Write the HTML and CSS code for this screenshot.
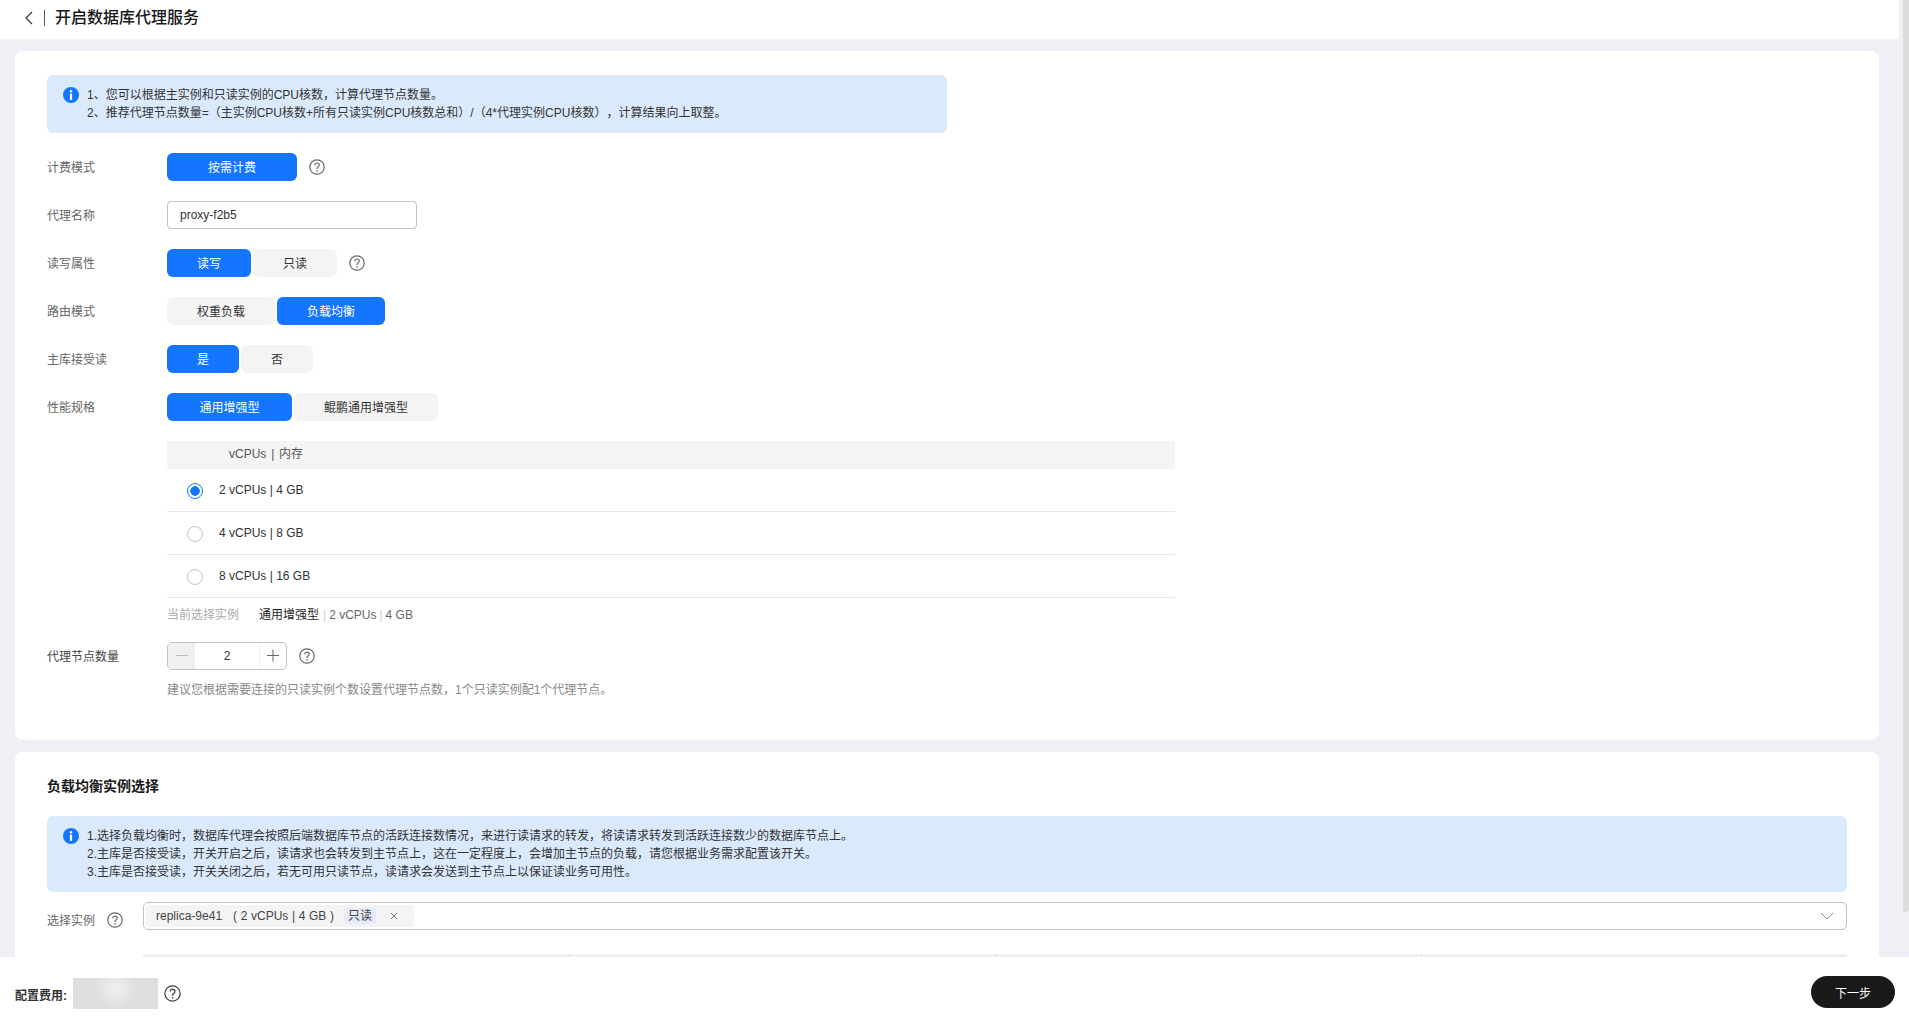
FILE: index.html
```html
<!DOCTYPE html>
<html lang="zh-CN">
  <head>
    <meta charset="utf-8" />
    <title>开启数据库代理服务</title>
    <link rel="stylesheet" href="styles.css">
  </head>

  <body>
    <svg class="icon-defs" width="0" height="0">
      <symbol id="help" viewBox="0 0 16 16">
        <circle cx="8" cy="8" r="7.2" fill="none" stroke="currentColor" stroke-width="1.2" />
        <path d="M5.7 6.2c0-1.3 1-2.2 2.3-2.2s2.3.9 2.3 2.1c0 1-.6 1.5-1.3 2-.7.4-1 .8-1 1.6v.3" fill="none" stroke="currentColor" stroke-width="1.2" />
        <circle cx="8" cy="12" r=".8" fill="currentColor" />
      </symbol>
      <symbol id="info" viewBox="0 0 16 16">
        <circle cx="8" cy="8" r="8" fill="#1476ff" />
        <circle cx="8" cy="4.3" r="1.2" fill="#fff" />
        <rect x="6.9" y="6.5" width="2.2" height="6.5" rx=".4" fill="#fff" />
      </symbol>
    </svg>

    <div class="page">
      <header class="topbar">
        <svg class="back-icon" width="10" height="14" viewBox="0 0 10 14">
          <path d="M8 1 2 7l6 6" fill="none" stroke="#333" stroke-width="1.2" />
        </svg>
        <span class="topbar-line"></span>
        <h1 class="topbar-title">开启数据库代理服务</h1>
      </header>

      <main class="content">
        <section class="card">
          <div class="notice notice-small">
            <svg class="notice-icon" width="16" height="16"><use href="#info" /></svg>
            <div>
              <p>1、您可以根据主实例和只读实例的CPU核数，计算代理节点数量。</p>
              <p>2、推荐代理节点数量=（主实例CPU核数+所有只读实例CPU核数总和）/（4*代理实例CPU核数），计算结果向上取整。</p>
            </div>
          </div>

          <div class="form-row">
            <label class="form-label">计费模式</label>
            <button type="button" class="seg active w-130">按需计费</button>
            <svg class="help" width="16" height="16"><use href="#help" /></svg>
          </div>

          <div class="form-row">
            <label class="form-label">代理名称</label>
            <input class="text-input" type="text" value="proxy-f2b5">
          </div>

          <div class="form-row">
            <label class="form-label">读写属性</label>
            <div class="seg-group">
              <button type="button" class="seg active w-84">读写</button>
              <button type="button" class="seg w-84">只读</button>
            </div>
            <svg class="help" width="16" height="16"><use href="#help" /></svg>
          </div>

          <div class="form-row">
            <label class="form-label">路由模式</label>
            <div class="seg-group">
              <button type="button" class="seg w-108">权重负载</button>
              <button type="button" class="seg active w-108">负载均衡</button>
            </div>
          </div>

          <div class="form-row">
            <label class="form-label">主库接受读</label>
            <div class="seg-group">
              <button type="button" class="seg active w-72">是</button>
              <button type="button" class="seg w-72">否</button>
            </div>
          </div>

          <div class="form-row">
            <label class="form-label">性能规格</label>
            <div class="seg-group">
              <button type="button" class="seg active w-125">通用增强型</button>
              <button type="button" class="seg w-144">鲲鹏通用增强型</button>
            </div>
          </div>

          <div class="spec-block">
            <table class="spec-table">
              <thead>
                <tr><th>vCPUs | 内存</th></tr>
              </thead>
              <tbody>
                <tr><td><span class="radio checked"></span>2 vCPUs | 4 GB</td></tr>
                <tr><td><span class="radio"></span>4 vCPUs | 8 GB</td></tr>
                <tr><td><span class="radio"></span>8 vCPUs | 16 GB</td></tr>
              </tbody>
            </table>
            <div class="current">
              <span class="current-label">当前选择实例</span>
              <span class="current-type">通用增强型</span>
              <span class="current-sep">|</span>
              <span>2 vCPUs</span>
              <span class="current-sep">|</span>
              <span>4 GB</span>
            </div>
          </div>

          <div class="form-row stepper-row">
            <label class="form-label dark">代理节点数量</label>
            <div class="stepper">
              <span class="step-btn step-minus"></span>
              <span class="step-value">2</span>
              <span class="step-btn step-plus"></span>
            </div>
            <svg class="help" width="16" height="16"><use href="#help" /></svg>
          </div>
          <p class="hint">建议您根据需要连接的只读实例个数设置代理节点数，1个只读实例配1个代理节点。</p>
        </section>

        <section class="card card-second">
          <h2 class="card-title">负载均衡实例选择</h2>
          <div class="notice">
            <svg class="notice-icon" width="16" height="16"><use href="#info" /></svg>
            <div>
              <p>1.选择负载均衡时，数据库代理会按照后端数据库节点的活跃连接数情况，来进行读请求的转发，将读请求转发到活跃连接数少的数据库节点上。</p>
              <p>2.主库是否接受读，开关开启之后，读请求也会转发到主节点上，这在一定程度上，会增加主节点的负载，请您根据业务需求配置该开关。</p>
              <p>3.主库是否接受读，开关关闭之后，若无可用只读节点，读请求会发送到主节点上以保证读业务可用性。</p>
            </div>
          </div>

          <div class="select-row">
            <label class="select-label">选择实例</label>
            <svg class="help select-help" width="16" height="16"><use href="#help" /></svg>
            <div class="select-box">
              <span class="tag">
                <span>replica-9e41</span>
                <span class="tag-spec">( 2 vCPUs | 4 GB )</span>
                <span class="tag-badge">只读</span>
                <svg class="tag-close" width="8" height="8" viewBox="0 0 8 8">
                  <path d="m1 1 6 6M7 1 1 7" stroke="#777" stroke-width="1" />
                </svg>
              </span>
              <svg class="select-arrow" width="14" height="8" viewBox="0 0 14 8">
                <path d="m1 1 6 6 6-6" fill="none" stroke="#888" stroke-width="1" />
              </svg>
            </div>
          </div>

          <div class="instance-head">
            <span></span><span></span><span></span><span></span>
          </div>
        </section>
      </main>

      <footer class="bottombar">
        <span class="fee-label">配置费用:</span>
        <span class="fee-blur"></span>
        <svg class="help fee-help" width="17" height="17"><use href="#help" /></svg>
        <button type="button" class="next-btn">下一步</button>
      </footer>

      <div class="scroll-thumb"></div>
    </div>
  </body>
</html>
```

FILE: styles.css
```css
* {
  box-sizing: border-box;
}

html, body {
  height: 100%;
}

body {
  margin: 0;
  overflow: hidden;
  font-family: "Liberation Sans", "Noto Sans CJK SC", sans-serif;
  font-size: 12px;
  color: #252b3a;
  background-color: #eef0f5;
  text-spacing-trim: space-all;
}

p, h1, h2 {
  margin: 0;
}

.icon-defs {
  position: absolute;
}

.page {
  position: relative;
  display: flex;
  flex-direction: column;
  height: 100%;
}

/* Top bar */
.topbar {
  display: flex;
  align-items: center;
  flex: none;
  width: 1899px;
  height: 39px;
  padding-bottom: 4px;
  background-color: #fff;
}

.back-icon {
  margin-left: 24px;
}

.topbar-line {
  width: 1px;
  height: 16px;
  margin: 0 10px 0 10px;
  background-color: #555;
}

.topbar-title {
  padding-bottom: 3px;
  font-size: 16px;
  font-weight: 500;
  color: #191919;
}

/* Main area */
.content {
  flex: 1;
  min-height: 0;
  overflow: hidden;
  padding: 12px 30px 0 15px;
}

.card {
  padding: 24px 32px;
  border-radius: 8px;
  background-color: #fff;
}

.card:first-child {
  height: 689px;
}

.card-second {
  margin-top: 12px;
  padding-top: 25px;
}

.card-title {
  font-size: 14px;
  font-weight: 700;
  line-height: 18px;
  color: #191919;
  margin-bottom: 21px;
}

/* Notices */
.notice {
  display: flex;
  padding: 11px 16px;
  border-radius: 6px;
  line-height: 18px;
  background-color: #dbe9fd;
  color: #333;
}

.notice-small {
  width: 900px;
  height: 58px;
  margin-bottom: 20px;
}

.notice-icon {
  flex: none;
  margin: 1px 8px 0 0;
}

/* Form */
.form-row {
  display: flex;
  align-items: center;
  height: 28px;
  margin-bottom: 20px;
}

.form-label {
  flex: none;
  width: 120px;
  padding-bottom: 2px;
  color: #666;
}

.form-label.dark {
  color: #444;
}

.seg-group {
  display: flex;
  gap: 2px;
}

.seg {
  height: 28px;
  padding: 0 0 2px;
  border: 0;
  border-radius: 6px;
  font: inherit;
  color: #333;
  background-color: #f4f4f4;
  cursor: pointer;
}

.seg.active {
  color: #fff;
  background-color: #1476ff;
}

.w-72 { width: 72px; }
.w-84 { width: 84px; }
.w-108 { width: 108px; }
.w-125 { width: 125px; }
.w-130 { width: 130px; }
.w-144 { width: 144px; }

.help {
  flex: none;
  margin-left: 12px;
  color: #666;
}

.text-input {
  width: 250px;
  height: 28px;
  padding: 0 12px;
  border: 1px solid #c0c0c0;
  border-radius: 4px;
  font: inherit;
  color: #333;
  outline: none;
}

/* Spec table */
.spec-block {
  width: 1008px;
  margin: 0 0 18px 120px;
}

.spec-table {
  width: 100%;
  border-spacing: 0;
}

.spec-table th {
  height: 28px;
  padding: 0 0 6px 62px;
  font-weight: 400;
  word-spacing: 1.5px;
  text-align: left;
  color: #555;
  background-color: #f4f4f4;
}

.spec-table td {
  height: 43px;
  padding: 2px 0 0 20px;
  border-bottom: 1px solid #e8e8e8;
  color: #333;
}

.radio {
  display: inline-block;
  width: 16px;
  height: 16px;
  margin-right: 16px;
  border: 1px solid #c4c4c4;
  border-radius: 50%;
  vertical-align: middle;
}

.radio.checked {
  border-color: #1476ff;
  background: radial-gradient(circle, #1476ff 0 4.5px, #fff 5px);
}

.current {
  display: flex;
  align-items: baseline;
  gap: 3px;
  height: 18px;
  margin-top: 8px;
  line-height: 18px;
  color: #666;
}

.current-label {
  width: 89px;
  color: #aaa;
}

.current-type {
  margin-right: 1px;
  color: #222;
}

.current-sep {
  color: #ccc;
}

/* Stepper */
.stepper-row {
  margin-bottom: 11px;
}

.stepper {
  display: flex;
  align-items: center;
  width: 120px;
  height: 28px;
  border: 1px solid #c0c0c0;
  border-radius: 5px;
  overflow: hidden;
}

.step-btn {
  position: relative;
  flex: none;
  height: 100%;
}

.step-minus {
  width: 27px;
  background-color: #f0f0f0;
}

.step-minus::before,
.step-plus::before,
.step-plus::after {
  content: "";
  position: absolute;
  top: 50%;
  left: 50%;
  width: 12px;
  height: 1px;
  margin: -1px 0 0 -6px;
  background-color: #bbb;
}

.step-plus {
  width: 27px;
}

.step-plus::before,
.step-plus::after {
  background-color: #666;
}

.step-plus::after {
  transform: rotate(90deg);
}

.step-plus {
  border-left: 1px solid #eee;
  height: 20px;
}

.step-value {
  flex: 1;
  text-align: center;
  color: #333;
}

.hint {
  margin-left: 120px;
  line-height: 18px;
  color: #888;
}

/* Select */
.select-row {
  display: flex;
  align-items: flex-start;
  margin-top: 10px;
  height: 28px;
}

.select-label {
  flex: none;
  margin-top: 9px;
  color: #666;
}

.select-help {
  margin: 10px 20px 0 12px;
}

.select-box {
  display: flex;
  flex: 1;
  align-items: center;
  justify-content: space-between;
  height: 28px;
  padding: 0 12px 0 2px;
  border: 1px solid #c0c0c0;
  border-radius: 5px;
}

.tag {
  display: flex;
  align-items: center;
  width: 268px;
  height: 22px;
  padding-left: 10px;
  border-radius: 3px;
  color: #444;
  background-color: #f4f4f4;
}

.tag-spec {
  margin-left: 11px;
  word-spacing: .3px;
}

.tag-badge {
  width: 32px;
  height: 16px;
  margin-left: 10px;
  line-height: 16px;
  text-align: center;
  border-radius: 2px;
  background-color: #e6ecfa;
}

.tag-close {
  margin-left: 14px;
}

.instance-head {
  display: grid;
  grid-template-columns: repeat(4, 1fr);
  height: 40px;
  margin: 24px 0 0 96px;
  background-color: #f0f0f0;
}

.instance-head span + span {
  border-left: 1px solid #ddd;
}

/* Bottom bar */
.bottombar {
  position: relative;
  display: flex;
  align-items: center;
  flex: none;
  height: 68px;
  padding: 0 14px 0 15px;
  background-color: #fff;
}

.fee-label {
  width: 58px;
  margin-top: 6px;
  font-weight: 700;
  color: #333;
}

.fee-blur {
  width: 85px;
  height: 31px;
  margin-top: 5px;
  background:
    radial-gradient(circle at 50% 35%, #f0f0f0 0, rgba(240, 240, 240, 0) 45%),
    #dedede;
}

.fee-help {
  margin: 5px 0 0 6px;
  color: #444;
}

.next-btn {
  width: 84px;
  height: 32px;
  margin: 2px 0 0 auto;
  border: 0;
  border-radius: 16px;
  font: inherit;
  color: #fff;
  background-color: #191919;
  cursor: pointer;
}

.scroll-thumb {
  position: absolute;
  top: 0;
  right: 0;
  width: 6px;
  height: 912px;
  border-radius: 0 0 3px 3px;
  background-color: #dcdcdc;
}
```
